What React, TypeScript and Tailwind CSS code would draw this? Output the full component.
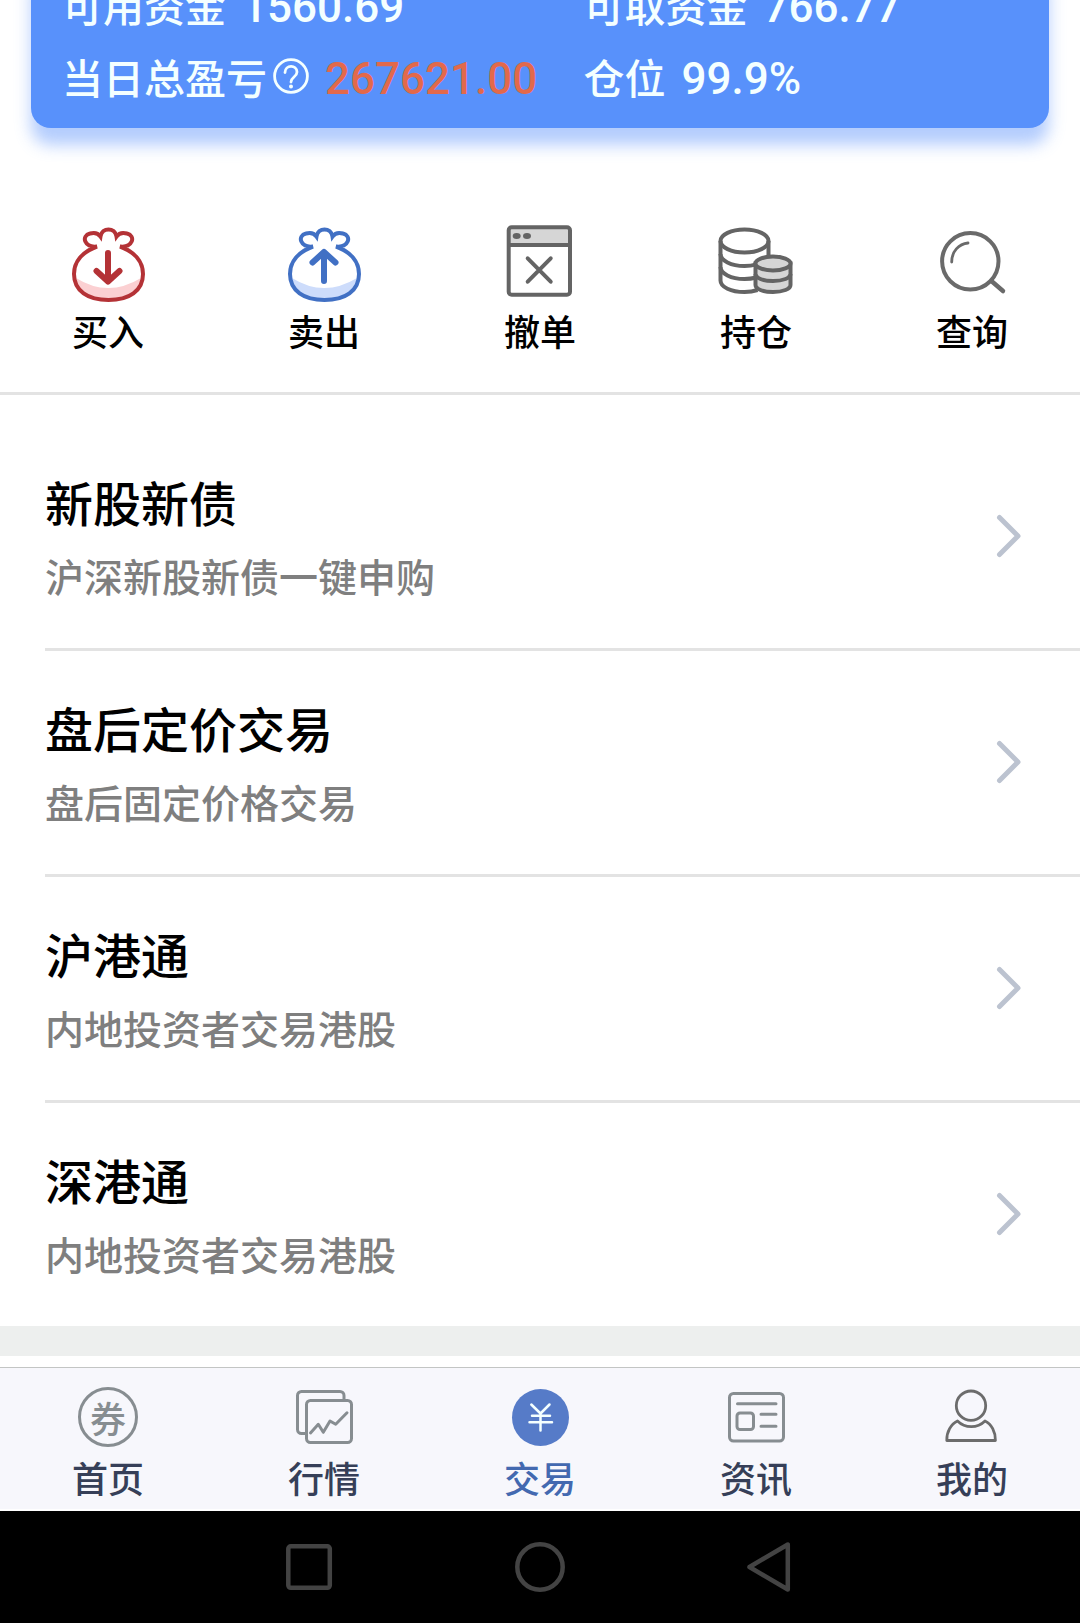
import React from 'react';

const BagIcon: React.FC<{ stroke: string; fill: string; arrow: string }> = ({ stroke, fill, arrow }) => (
  <svg viewBox="0 0 80 80" className="h-20 w-20" fill="none" aria-hidden="true">
    <path d="M8 54 Q40 74 73 54 Q68 76 40.5 76 Q13 76 8 54Z" fill={fill} />
    <path
      d="M29 22.5 C16 24 13 11.500 22 9.500 C27 8 30 9 32.500 12.500 C34 3 47 3 48.500 12.500 C51 9 54 8 59 9.500 C68 11.500 65 24 52 22.500 C67 28 75 38 75 50 C75 67 61 76 40.500 76 C20 76 6 67 6 50 C6 38 14 28 29 22.500Z"
      stroke={stroke}
      strokeWidth="4"
    />
    <path d={arrow} stroke={stroke} strokeWidth="6" strokeLinecap="round" strokeLinejoin="round" />
  </svg>
);

const CancelIcon = () => (
  <svg viewBox="0 0 80 80" className="h-20 w-20" fill="none" stroke="#646464" strokeWidth="4" aria-hidden="true">
    <path d="M9 4h61v17H9z" fill="#d6d6d6" stroke="none" />
    <rect x="8.700" y="3.300" width="61.300" height="67.400" rx="3" />
    <path d="M9 21h61" />
    <path d="M27.700 34.300l23 23.400M50.700 34.300l-23 23.400" strokeLinecap="round" />
    <ellipse cx="16.700" cy="12" rx="4" ry="3" fill="#646464" stroke="none" />
    <ellipse cx="27" cy="12" rx="4" ry="3" fill="#646464" stroke="none" />
  </svg>
);

const CoinsIcon = () => (
  <svg viewBox="0 0 80 80" className="h-20 w-20" fill="none" stroke="#646464" strokeWidth="4" aria-hidden="true">
    <ellipse cx="28.500" cy="17" rx="24" ry="11.500" />
    <path d="M4.500 17v39.500c0 6.500 10.500 11.500 24 11.500 5 0 9-.6 13-2M52.500 17v15" />
    <path d="M4.500 30c0 6.500 10.500 12 24 12 4.500 0 8.500-.6 12-1.600M4.500 43c0 6.500 10.500 12 24 12 4 0 8-.5 12-1.500" />
    <path d="M39.500 39.500v21.500c0 4 7.500 7 17.500 7s17.500-3 17.500-7v-21.500z" fill="#d6d6d6" />
    <ellipse cx="57" cy="39.500" rx="17.500" ry="7" fill="#d6d6d6" />
    <path d="M39.500 50c0 4 7.500 7 17.500 7s17.500-3 17.500-7" />
  </svg>
);

const SearchIcon = () => (
  <svg viewBox="0 0 80 80" className="h-20 w-20" fill="none" stroke="#6a6a6a" strokeLinecap="round" aria-hidden="true">
    <circle cx="38.300" cy="37.300" r="28.200" strokeWidth="4" />
    <path d="M60 57.500l11 9.500" strokeWidth="4.500" />
    <path d="M19.700 38c0-10.500 7-18 16.300-19" strokeWidth="2.800" />
  </svg>
);

const HomeIcon = () => (
  <span className="flex h-16 w-16 items-center justify-center" aria-hidden="true">
    <span className="flex h-15 w-15 items-center justify-center rounded-full border-3 border-[#878d91] text-[36px] leading-none font-medium text-[#878d91]">
      券
    </span>
  </span>
);

const MarketIcon = () => (
  <svg viewBox="0 0 64 64" className="h-16 w-16" fill="none" stroke="#878d91" strokeWidth="3" aria-hidden="true">
    <path d="M14 48.500H9.500a4 4 0 0 1-4-4V10.500a4 4 0 0 1 4-4H48a4 4 0 0 1 4 4v5" />
    <rect x="14.500" y="15.500" width="45" height="42" rx="4" />
    <path d="M18.500 48l7.800-8.700 5 8L38 36l5.700 3.300 11.300-11.500" strokeLinecap="round" strokeLinejoin="round" />
  </svg>
);

const TradeIcon = () => (
  <svg viewBox="0 0 64 64" className="h-16 w-16" fill="none" aria-hidden="true">
    <circle cx="32.500" cy="32.500" r="28.500" fill="#567bc8" />
    <path
      d="M23.300 19.500l9.200 9 9-9M32.500 28.500V45.500M24 30.700h18M21.500 37.300h22.500"
      stroke="#f4ffff"
      strokeWidth="2.500"
      strokeLinecap="round"
      strokeLinejoin="round"
    />
  </svg>
);

const NewsIcon = () => (
  <svg viewBox="0 0 64 64" className="h-16 w-16" fill="none" stroke="#878d91" strokeWidth="3" strokeLinecap="round" aria-hidden="true">
    <rect x="5.500" y="8.500" width="54" height="47.500" rx="4" />
    <rect x="13" y="28" width="16.500" height="16.500" rx="3" />
    <path d="M13.500 18.700h38.500M37 29.300h15M37 41.300h15" />
  </svg>
);

const MeIcon = () => (
  <svg viewBox="0 0 64 64" className="h-16 w-16" fill="none" stroke="#6c6c6c" strokeWidth="2.800" strokeLinejoin="round" aria-hidden="true">
    <circle cx="31" cy="20.700" r="14.700" />
    <path d="M17.500 36C11 39 6.500 47 6.800 55.500h48.600C55.600 47 51.500 39 45 36c-4 4-8.500 5.700-13.700 5.700S21.500 40 17.500 36z" />
  </svg>
);

const ACTIONS = [
  { label: '买入', icon: <BagIcon stroke="#b43236" fill="#fbd0d2" arrow="M40 29v28M28.500 47L40 57.500 51.500 47" /> },
  { label: '卖出', icon: <BagIcon stroke="#4170c4" fill="#cddcfb" arrow="M40 57V29M28.500 38.500L40 28l11.500 10.500" /> },
  { label: '撤单', icon: <CancelIcon /> },
  { label: '持仓', icon: <CoinsIcon /> },
  { label: '查询', icon: <SearchIcon /> },
];

const SERVICES = [
  { title: '新股新债', desc: '沪深新股新债一键申购' },
  { title: '盘后定价交易', desc: '盘后固定价格交易' },
  { title: '沪港通', desc: '内地投资者交易港股' },
  { title: '深港通', desc: '内地投资者交易港股' },
];

const TABS = [
  { label: '首页', icon: <HomeIcon /> },
  { label: '行情', icon: <MarketIcon /> },
  { label: '交易', icon: <TradeIcon />, active: true },
  { label: '资讯', icon: <NewsIcon /> },
  { label: '我的', icon: <MeIcon /> },
];

const AccountCard = () => (
  <section className="-mt-8 px-[31px]">
    <div className="grid auto-rows-[72px] grid-cols-[6fr_5fr] rounded-b-[20px] bg-[#5891fb] px-[31px] pb-4 text-[41px] leading-[72px] font-medium whitespace-nowrap text-[#f4ffff] shadow-[0_17px_16px_rgba(88,145,251,0.45)]">
      <div className="flex items-baseline gap-4">
        <span>可用资金</span>
        <span className="font-[Roboto,sans-serif] text-[44px]">1560.69</span>
      </div>
      <div className="flex items-baseline gap-4">
        <span>可取资金</span>
        <span className="font-[Roboto,sans-serif] text-[44px]">766.77</span>
      </div>
      <div className="flex items-baseline gap-4">
        <span className="flex items-center gap-1.5">
          当日总盈亏
          <button type="button" aria-label="盈亏说明">
            <svg viewBox="0 0 36 36" className="h-9 w-9" fill="none" stroke="currentColor" strokeWidth="2.800" aria-hidden="true">
              <circle cx="18" cy="18" r="16.400" />
              <path d="M12 14.500c0-8 12-8 12-.5 0 5-6 5-6 10" strokeLinecap="round" />
              <circle cx="18" cy="28.500" r="2" fill="currentColor" stroke="none" />
            </svg>
          </button>
        </span>
        <span className="font-[Roboto,sans-serif] text-[44px] text-[#e2694b]">267621.00</span>
      </div>
      <div className="flex items-baseline gap-4">
        <span>仓位</span>
        <span className="font-[Roboto,sans-serif] text-[44px]">99.9%</span>
      </div>
    </div>
  </section>
);

const App: React.FC = () => {
  return (
    <div className="flex min-h-screen flex-col overflow-hidden bg-white font-['Noto_Sans_CJK_SC',sans-serif] text-black" lang="zh-CN">
      <main className="flex-1">
        <AccountCard />

        <section className="grid grid-cols-5 border-b-3 border-[#e3e3e3] pt-24 pb-10">
          {ACTIONS.map((action) => (
            <button key={action.label} type="button" className="flex flex-col items-center gap-1">
              {action.icon}
              <span className="text-[36px] leading-[44px] font-medium">{action.label}</span>
            </button>
          ))}
        </section>

        <ul className="pt-[30px]">
          {SERVICES.map((item) => (
            <li key={item.title} className="ml-[45px] border-b-3 border-[#e3e3e3] last:border-b-0">
              <a href="#" className="flex items-center justify-between pt-11 pr-[55px] pb-[45px]">
                <div>
                  <h2 className="text-[48px] leading-[64px] font-medium">{item.title}</h2>
                  <p className="mt-3.5 text-[39px] leading-[56px] font-medium text-[#7f7f7f]">{item.desc}</p>
                </div>
                <svg viewBox="0 0 36 48" className="h-12 w-9" fill="none" stroke="#bcc3d0" strokeWidth="5" strokeLinecap="round" strokeLinejoin="round" aria-hidden="true">
                  <path d="M10.500 5.500L29 24 10.500 42.500" />
                </svg>
              </a>
            </li>
          ))}
        </ul>
        <div className="h-[30px] bg-[#edefee]"></div>
      </main>

      <footer className="mt-[11px]">
        <nav className="mb-0.5 grid grid-cols-5 border-t border-[#c3c5c4] bg-[#f7f7fc] pt-[17px] pb-2.5">
          {TABS.map((tab) => (
            <a
              key={tab.label}
              href="#"
              aria-current={tab.active ? 'page' : undefined}
              className={`flex flex-col items-center gap-1.5 text-[36px] leading-[44px] font-medium ${tab.active ? 'text-[#4369b0]' : 'text-[#363f58]'}`}
            >
              {tab.icon}
              <span>{tab.label}</span>
            </a>
          ))}
        </nav>

        {/* Android system keys */}
        <div className="flex h-28 items-center justify-center gap-[180px] bg-black">
          <button type="button" aria-label="最近任务">
            <svg viewBox="0 0 50 50" className="h-[50px] w-[50px]" fill="none" stroke="#434343" strokeWidth="4.500" aria-hidden="true">
              <rect x="3.300" y="4.300" width="41.500" height="41.500" rx="2.500" />
            </svg>
          </button>
          <button type="button" aria-label="主屏幕">
            <svg viewBox="0 0 50 50" className="h-[50px] w-[50px]" fill="none" stroke="#434343" strokeWidth="4.500" aria-hidden="true">
              <circle cx="25" cy="25" r="22.700" />
            </svg>
          </button>
          <button type="button" aria-label="返回">
            <svg viewBox="0 0 50 50" className="h-[50px] w-[50px]" fill="none" stroke="#434343" strokeWidth="4.500" strokeLinejoin="round" aria-hidden="true">
              <path d="M42.800 2.500v45L4.500 25z" />
            </svg>
          </button>
        </div>
      </footer>
    </div>
  );
};

export default App;
